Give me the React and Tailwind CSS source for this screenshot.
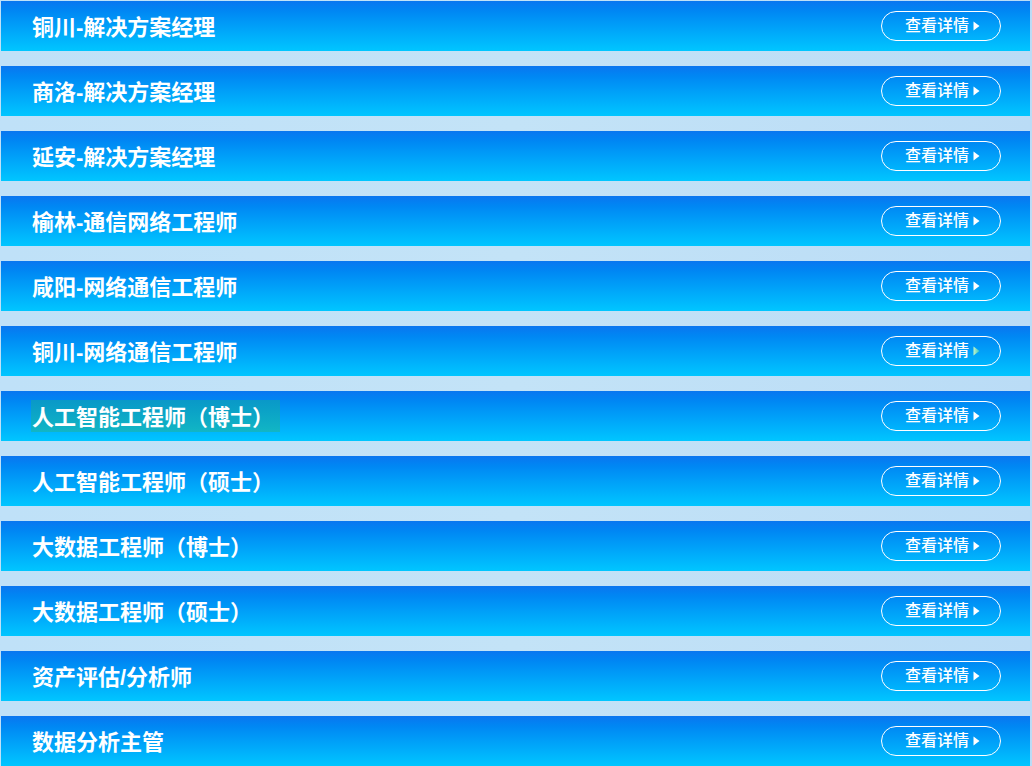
const jobs = [
  { title: '铜川-解决方案经理' },
  { title: '商洛-解决方案经理' },
  { title: '延安-解决方案经理' },
  { title: '榆林-通信网络工程师' },
  { title: '咸阳-网络通信工程师' },
  { title: '铜川-网络通信工程师', hover: true },
  { title: '人工智能工程师（博士）', selected: true },
  { title: '人工智能工程师（硕士）' },
  { title: '大数据工程师（博士）' },
  { title: '大数据工程师（硕士）' },
  { title: '资产评估/分析师' },
  { title: '数据分析主管' },
];

function JobRow({ title, hover, selected }) {
  return (
    <div className="h-[50px] flex items-center justify-between bg-gradient-to-b from-[#0a76f0] to-[#00c6ff] pl-[31px] pr-[29px]">
      <span
        className={`block h-[32px] text-[22px] leading-[36px] font-bold text-white ${
          selected ? 'bg-gradient-to-b from-[#0a98c8] to-[#12b6c4] pr-[6px] pl-[1px] -ml-[1px]' : ''
        }`}
      >
        {title}
      </span>
      <button className="h-[30px] w-[120px] rounded-full border border-white flex items-center justify-center gap-[4px] pl-[3px] text-white text-[16px] font-medium leading-none">
        <span>查看详情</span>
        <svg width="7" height="10" viewBox="0 0 7 10">
          <defs>
            <linearGradient id="tg" x1="0" y1="0" x2="1" y2="0">
              <stop offset="0" stopColor="#c4f5c8" />
              <stop offset="1" stopColor="#3cc8c0" />
            </linearGradient>
          </defs>
          <path d="M0.5 0.5 L6.5 5 L0.5 9.5 Z" fill={hover ? 'url(#tg)' : '#ffffff'} />
        </svg>
      </button>
    </div>
  );
}

export default function App() {
  return (
    <div
      className="w-[1032px] h-[766px] overflow-hidden bg-gradient-to-r from-[#bfe1f8] via-[#c3e3f7] to-[#badcf6] pt-[1px] pl-[1px] pr-[2px] flex flex-col gap-[15px]"
      style={{ fontFamily: '"Liberation Sans", "Noto Sans CJK SC", sans-serif' }}
    >
      {jobs.map((job, i) => (
        <JobRow key={i} {...job} />
      ))}
    </div>
  );
}
